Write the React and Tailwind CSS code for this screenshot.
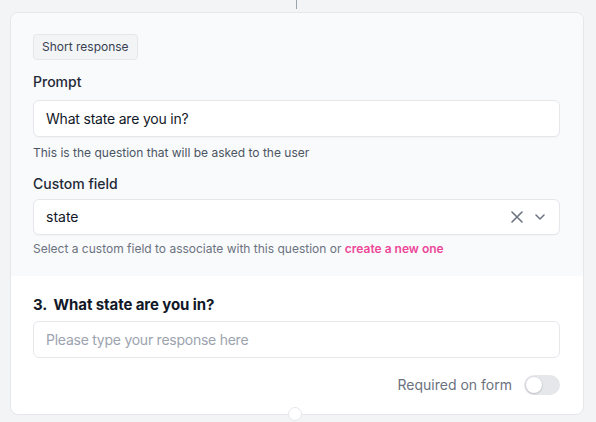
import React from "react";

function ClearIcon() {
  return (
    <svg width="12" height="12" viewBox="0 0 12 12" fill="none" stroke="#6b7280" strokeWidth="1.6" strokeLinecap="round">
      <path d="M1 1l10 10M11 1L1 11" />
    </svg>
  );
}

function ChevronIcon() {
  return (
    <svg width="10" height="6" viewBox="0 0 10 6" fill="none" stroke="#6b7280" strokeWidth="1.5" strokeLinecap="round" strokeLinejoin="round">
      <path d="M1 1l4 4 4-4" />
    </svg>
  );
}

export default function App() {
  return (
    <div className="min-h-screen bg-[#f3f4f6] font-['Inter','Liberation_Sans',sans-serif] pb-4">
      {/* connector from the previous step */}
      <div className="h-[12px]">
        <div className="ml-[296px] h-[9px] w-px bg-[#9ca3af]" />
      </div>

      <div className="relative ml-[10px] w-[574px] rounded-lg border border-[#e5e7eb] bg-white">
        {/* editor section */}
        <div className="rounded-t-lg bg-[#f9fafb] pl-[22px] pr-[23px] pt-5 pb-[19px]">
          <div className="inline-flex h-[26px] items-center rounded border border-[#e5e7eb] bg-[#f3f4f6] px-2 text-xs text-[#374151]">
            Short response
          </div>

          <div className="mt-3 text-sm leading-5 font-medium text-[#1f2937]">Prompt</div>
          <div className="mt-2 flex h-[37px] items-center rounded-md border border-[#e5e7eb] bg-white px-3 text-sm tracking-[-0.2px] text-[#111827] shadow-[0_1px_1px_rgba(0,0,0,0.03)]">
            What state are you in?
          </div>
          <div className="mt-2 text-xs leading-4 text-[#4b5563]">
            This is the question that will be asked to the user
          </div>

          <div className="mt-[13px] text-sm leading-5 font-medium text-[#1f2937]">Custom field</div>
          <div className="mt-[5px] flex h-[36px] items-center rounded-md border border-[#e5e7eb] bg-white pl-3 pr-[14px] text-sm text-[#111827] shadow-[0_1px_1px_rgba(0,0,0,0.03)]">
            <span className="flex-1">state</span>
            <span className="flex items-center">
              <ClearIcon />
            </span>
            <span className="ml-[12px] flex items-center">
              <ChevronIcon />
            </span>
          </div>
          <div className="mt-[6px] text-xs leading-4 text-[#6b7280]">
            Select a custom field to associate with this question or{" "}
            <span className="font-semibold text-[#ec4899]">create a new one</span>
          </div>
        </div>

        {/* preview section */}
        <div className="rounded-b-lg pl-[22px] pr-[23px] pt-[17px] pb-[19px]">
          <div className="whitespace-pre text-[15px] leading-6 font-bold tracking-[-0.1px] text-[#111827]">3.  What state are you in?</div>
          <div className="mt-1 flex h-[37px] items-center rounded-md border border-[#e5e7eb] bg-white px-3 text-sm tracking-[-0.25px] text-[#9ca3af]">
            Please type your response here
          </div>
          <div className="mt-[17px] flex items-center justify-end gap-3">
            <span className="text-sm leading-5 text-[#6b7280]">Required on form</span>
            <div className="flex h-5 w-9 items-center rounded-full bg-[#e5e7eb] px-[2px]">
              <div className="h-4 w-4 rounded-full bg-white shadow-[0_0_0_1px_rgba(0,0,0,0.04),0_1px_2px_rgba(0,0,0,0.15)]" />
            </div>
          </div>
        </div>

        {/* add-step handle on the bottom edge */}
        <div className="absolute bottom-[-7px] left-[277px] flex h-[14px] w-[14px] items-center justify-center rounded-full border border-[#e5e7eb] bg-white" />
      </div>
    </div>
  );
}
